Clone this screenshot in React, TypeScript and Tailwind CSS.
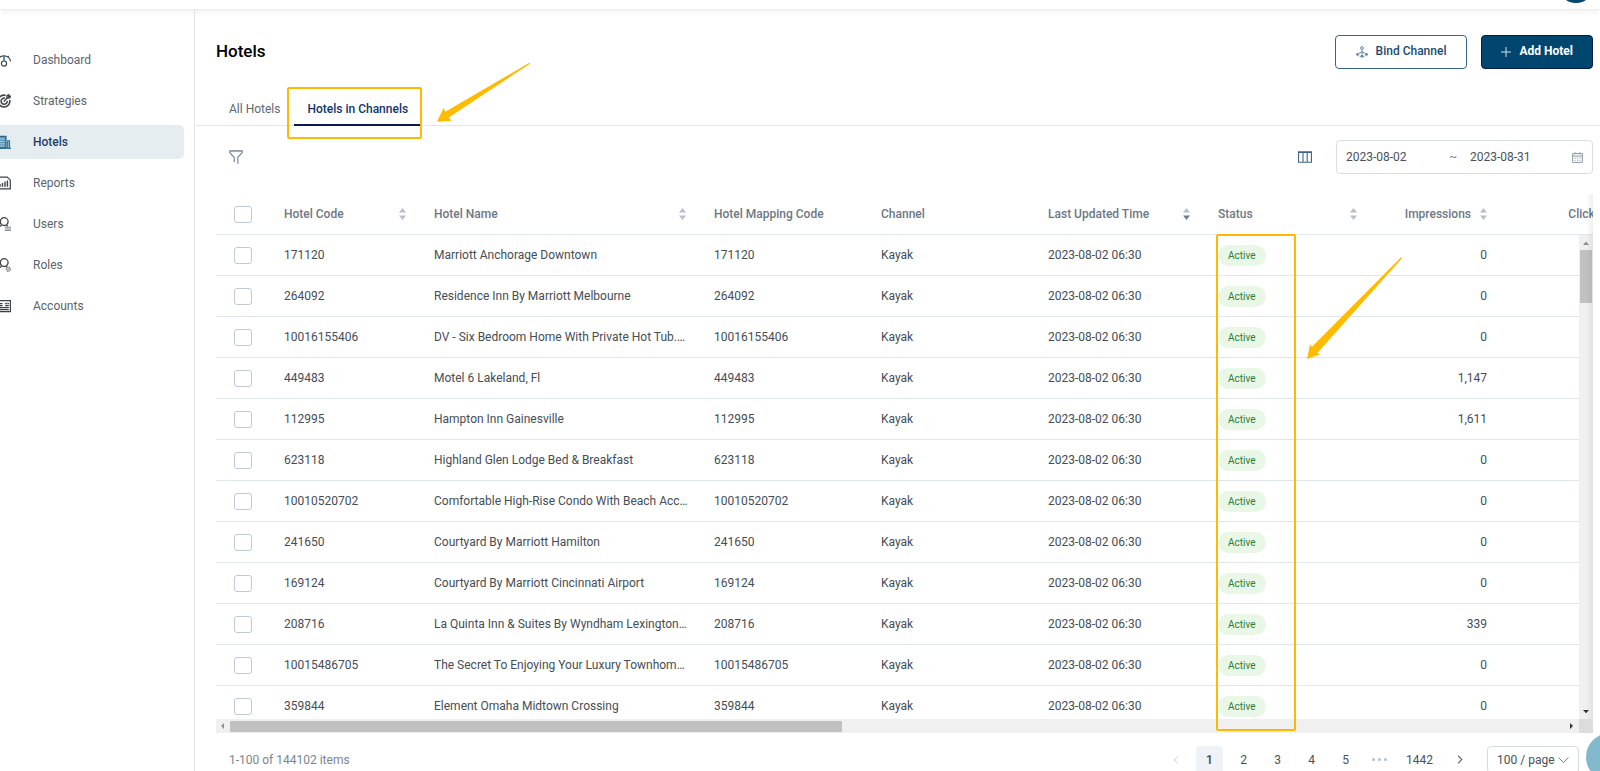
import React from "react";

type SortState = "none" | "both" | "down";

const hotels: { code: string; name: string; impressions: string }[] = [
  { code: "171120", name: "Marriott Anchorage Downtown", impressions: "0" },
  { code: "264092", name: "Residence Inn By Marriott Melbourne", impressions: "0" },
  { code: "10016155406", name: "DV - Six Bedroom Home With Private Hot Tub.…", impressions: "0" },
  { code: "449483", name: "Motel 6 Lakeland, Fl", impressions: "1,147" },
  { code: "112995", name: "Hampton Inn Gainesville", impressions: "1,611" },
  { code: "623118", name: "Highland Glen Lodge Bed & Breakfast", impressions: "0" },
  { code: "10010520702", name: "Comfortable High-Rise Condo With Beach Acc…", impressions: "0" },
  { code: "241650", name: "Courtyard By Marriott Hamilton", impressions: "0" },
  { code: "169124", name: "Courtyard By Marriott Cincinnati Airport", impressions: "0" },
  { code: "208716", name: "La Quinta Inn & Suites By Wyndham Lexington…", impressions: "339" },
  { code: "10015486705", name: "The Secret To Enjoying Your Luxury Townhom…", impressions: "0" },
  { code: "359844", name: "Element Omaha Midtown Crossing", impressions: "0" },
];

const columns: { label: string; width: string; sort: SortState; numeric?: boolean }[] = [
  { label: "Hotel Code", width: "w-[150px]", sort: "both" },
  { label: "Hotel Name", width: "w-[280px]", sort: "both" },
  { label: "Hotel Mapping Code", width: "w-[167px]", sort: "none" },
  { label: "Channel", width: "w-[167px]", sort: "none" },
  { label: "Last Updated Time", width: "w-[170px]", sort: "down" },
  { label: "Status", width: "w-[167px]", sort: "both" },
  { label: "Impressions", width: "w-[130px]", sort: "both", numeric: true },
  { label: "Clicks", width: "w-[130px]", sort: "both", numeric: true },
];

function NavSvg({ children }: { children: React.ReactNode }) {
  return (
    <svg viewBox="0 0 14 14" className="-ml-[3px] size-[14px] shrink-0" fill="none" stroke="#3c4248" strokeWidth="1.2" aria-hidden="true">
      {children}
    </svg>
  );
}

const navIcons: Record<string, React.ReactNode> = {
  Dashboard: (
    <NavSvg>
      <path d="M.4 8.4A6.7 6.7 0 0 1 13.6 8.4M2.3 3l1.2 1.2M11.7 3l-1.2 1.2" />
      <circle cx="7" cy="10.6" r="2.6" />
      <path d="M7 3v5" stroke="#2c7da8" strokeWidth="1.6" />
    </NavSvg>
  ),
  Strategies: (
    <NavSvg>
      <path d="M8.6 1.4A5.9 5.9 0 1 0 12.8 6.2" strokeWidth="1.6" />
      <path d="M8 4.2a3.1 3.1 0 1 0 2.2 2.6" strokeWidth="1.5" />
      <path d="M6.8 7.4 11 3.2M10 4V1.8L11.7.5v1.8h1.9L12.2 4z" strokeWidth="1.4" />
    </NavSvg>
  ),
  Hotels: (
    <NavSvg>
      <path d="M1 13V1.4h8V13z" fill="#5d93b3" stroke="#27648c" />
      <path d="M2.5 4h5M2.5 6.4h5M2.5 8.8h5M2.5 11h5" stroke="#c3d9e5" strokeWidth=".8" />
      <path d="M10.6 13V5.6h2V13" fill="#8fb5cb" stroke="#27648c" strokeWidth=".9" />
      <path d="M0 13.3h14" stroke="#27648c" />
    </NavSvg>
  ),
  Reports: (
    <NavSvg>
      <path d="M.7 1.2h9.6l3 3v8.6H.7z" />
      <path d="M3 10.8V8M5.5 10.8V7M8 10.8V5.6M10.4 10.8V4.4" strokeWidth="1.4" />
    </NavSvg>
  ),
  Users: (
    <NavSvg>
      <circle cx="7.2" cy="4.6" r="3.9" strokeWidth="1.3" />
      <path d="M1 13.2c0-2.6 1.3-4 3.6-4.8M9.4 8l1.4 1.4" strokeWidth="1.3" />
      <path d="M7.8 10.2H14M7.8 12H14M7.8 13.6H14" stroke="#81878c" strokeWidth="1" />
    </NavSvg>
  ),
  Roles: (
    <NavSvg>
      <circle cx="7.2" cy="4.6" r="3.9" strokeWidth="1.3" />
      <path d="M1 13.2c0-2.6 1.3-4 3.6-4.8M9 8l1 1" strokeWidth="1.3" />
      <circle cx="11.2" cy="11.2" r="2" stroke="#81878c" strokeWidth="1.4" strokeDasharray="1.1 .4" />
      <circle cx="11.2" cy="11.2" r=".7" stroke="#81878c" strokeWidth=".7" />
    </NavSvg>
  ),
  Accounts: (
    <NavSvg>
      <path d="M.6 1.6h12.8v11H.6z" />
      <path d="M2.6 4.6h3M2.6 6.6h3M10 3.6v1.6M8.2 6.6h3.6M2.6 8.6h9.2M2.6 10.6h9.2" strokeWidth="1.1" />
      <path d="M8 4.6h1.2M10.8 4.6H12" />
    </NavSvg>
  ),
};

function Sorter({ state }: { state: SortState }) {
  return (
    <svg viewBox="0 0 7 12" className="h-[12px] w-[7px] shrink-0" aria-hidden="true">
      <path d="M3.5 0 7 4.6H0z" fill="#b4c0cb" />
      <path d="M3.5 12 0 7.4h7z" fill={state === "down" ? "#6a7b8b" : "#b4c0cb"} />
    </svg>
  );
}

function Checkbox({ label }: { label: string }) {
  return (
    <input
      type="checkbox"
      aria-label={label}
      className="mx-auto block h-[17px] w-[18px] appearance-none rounded-[3px] border border-[#bfcad4] bg-white checked:bg-[#00466e]"
    />
  );
}

function Sidebar() {
  return (
    <nav className="w-[195px] shrink-0 overflow-hidden border-r border-[#e1e6ea] pt-[33px] pr-[10px]">
      <ul className="flex flex-col gap-[7px]">
        {Object.keys(navIcons).map((name) => (
          <li key={name}>
            <a
              href="#"
              aria-current={name === "Hotels" ? "page" : undefined}
              className={
                name === "Hotels"
                  ? "flex h-[34px] items-center gap-[22px] rounded-r-[5px] bg-[#e6edf0] font-medium text-[#1d3f66]"
                  : "flex h-[34px] items-center gap-[22px] text-[#5b636b]"
              }
            >
              {navIcons[name]}
              {name}
            </a>
          </li>
        ))}
      </ul>
    </nav>
  );
}

function PageHeader() {
  return (
    <header className="flex h-[34px] items-center gap-[14px] pr-[7px] pl-[21px]">
      <h1 className="flex-1 pb-[2px] text-[17px] leading-[22px] font-medium text-black">Hotels</h1>
      <button className="flex h-[34px] items-center gap-2 rounded-[4px] border border-[#35658a] px-5 pb-[2px] font-medium text-[#214a70]">
        <svg viewBox="0 0 12 12" className="mt-[2px] size-[12px]" fill="none" stroke="#5f8aa6" aria-hidden="true">
          <circle cx="6" cy="2" r="1.4" />
          <path d="M6 3.4v5.2M6 5.8 2.6 7.6M6 5.8l3.4 1.8M3.4 10l1.2.5M8.6 10l-1.2.5" />
          <circle cx="6" cy="10.2" r="1.1" fill="#5f8aa6" />
          <circle cx="1.5" cy="8.4" r="1" fill="#5f8aa6" />
          <circle cx="10.5" cy="8.4" r="1" fill="#5f8aa6" />
        </svg>
        Bind Channel
      </button>
      <button className="flex h-[34px] items-center gap-2 rounded-[4px] border border-[#001a56] bg-[#00466e] px-[19px] pb-[2px] font-bold text-white">
        <svg viewBox="0 0 10 10" className="mt-[2px] size-[10px]" stroke="#d5e2ea" aria-hidden="true">
          <path d="M5 0v10M0 5h10" />
        </svg>
        Add Hotel
      </button>
    </header>
  );
}

function Tabs() {
  return (
    <div role="tablist" className="mt-6 flex h-[33px] border-b border-[#e1e4e8] pl-5">
      <button role="tab" aria-selected="false" className="h-[33px] px-[14px] pb-[2px] text-[#5d6872]">
        All Hotels
      </button>
      <div className="relative">
        <button role="tab" aria-selected="true" className="h-[33px] px-[13px] pb-[2px] font-medium text-[#10356b]">
          Hotels in Channels
          <span className="absolute inset-x-0 -bottom-px h-[2px] bg-[#0a1a55]" />
        </button>
        <div className="pointer-events-none absolute -top-[6px] -left-[7px] h-[52px] w-[135px] rounded-[2px] border-2 border-[#ffb900]" />
        <svg viewBox="0 0 96 62" className="pointer-events-none absolute -top-[32px] left-[142px] h-[62px] w-[96px]" fill="#ffbb00" aria-hidden="true">
          <path d="M1 60.7 7.7 46.7 9.3 50.7 93.3 1.7 94 2.7 12.3 56.7 16 59.7z" />
        </svg>
      </div>
    </div>
  );
}

function Toolbar() {
  return (
    <div className="mt-[14px] flex h-[34px] items-center pr-[7px] pl-[34px]">
      <button aria-label="Filter" className="size-[14px]">
        <svg viewBox="0 0 14 14" className="size-[14px]" fill="none" stroke="#6f7f8e" strokeWidth="1.1" strokeLinejoin="round" aria-hidden="true">
          <path d="M5.3 12V7.6L.8 2.6V.8h12.4v1.8L8.9 7.2V13.8M5.3 7.6" />
          <path d="M.9 1.6h12.2" strokeWidth=".6" />
        </svg>
      </button>
      <span className="flex-1" />
      <button aria-label="Columns" className="mr-6 h-[12px] w-[14px]">
        <svg viewBox="0 0 14 12" className="h-[12px] w-[14px]" fill="none" stroke="#3e6384" strokeWidth="1.1" aria-hidden="true">
          <path d="M.6.8h12.8v10.4H.6zM.6 1.4h12.8M5 .8v10.4M9.2 .8v10.4" />
        </svg>
      </button>
      <div className="flex h-[34px] w-[257px] items-center rounded-[4px] border border-[#d9dee3] px-[9px] text-[#4a5158]">
        <input aria-label="Start date" defaultValue="2023-08-02" className="w-[97px] min-w-0 outline-none" />
        <span className="w-[27px] pl-[6px] text-[#7d8894]">~</span>
        <input aria-label="End date" defaultValue="2023-08-31" className="min-w-0 flex-1 outline-none" />
        <svg viewBox="0 0 11 11" className="size-[11px] shrink-0" fill="none" stroke="#8e99a4" aria-hidden="true">
          <path d="M.6 1.6h9.8v8.8H.6zM.6 4h9.8M3 .2v2M8 .2v2" />
          <path d="M2.4 6h1.2M4.9 6h1.2M7.4 6h1.2M2.4 8.2h1.2M4.9 8.2h1.2M7.4 8.2h1.2" strokeWidth="1.1" />
        </svg>
      </div>
    </div>
  );
}

function HotelTable() {
  return (
    <div className="relative mt-5 mr-[7px] ml-[21px]">
      <div className="relative">
        <div className="h-[525px] overflow-auto [scrollbar-width:none]">
          <table className="w-full min-w-[1415px] table-fixed border-separate border-spacing-0 text-left whitespace-nowrap">
            <thead>
              <tr className="h-[41px]">
                <th className="w-[54px] border-b border-[#e0e5e9] p-0">
                  <Checkbox label="Select all hotels" />
                </th>
                {columns.map((c) => (
                  <th key={c.label} className={`${c.width} border-b border-[#e0e5e9] px-[14px] py-0 font-medium text-[#6c7885]`}>
                    <div className={c.numeric ? "flex items-center justify-end gap-[9px]" : "flex items-center justify-between"}>
                      {c.label}
                      {c.sort !== "none" && <Sorter state={c.sort} />}
                    </div>
                  </th>
                ))}
              </tr>
            </thead>
            <tbody className="text-[#464d54] [&_td]:border-b [&_td]:border-[#e0e5e9]">
              {hotels.map((h) => (
                <tr key={h.code} className="h-[41px]">
                  <td className="p-0">
                    <Checkbox label={`Select ${h.name}`} />
                  </td>
                  <td className="px-[14px] py-0">{h.code}</td>
                  <td className="px-[14px] py-0">{h.name}</td>
                  <td className="px-[14px] py-0">{h.code}</td>
                  <td className="px-[14px] py-0">Kayak</td>
                  <td className="px-[14px] py-0">2023-08-02 06:30</td>
                  <td className="px-[14px] py-0">
                    <span className="mt-px flex h-[21px] w-fit items-center rounded-full bg-[#e8f7e6] px-[10px] text-[10px] text-[#2f7d38]">
                      Active
                    </span>
                  </td>
                  <td className="px-[14px] py-0 text-right">{h.impressions}</td>
                  <td className="p-0" />
                </tr>
              ))}
            </tbody>
          </table>
        </div>
        <div className="absolute top-[41px] right-0 bottom-0 flex w-[14px] flex-col items-center bg-[#f0f0f0]">
          <svg viewBox="0 0 14 15" className="h-[15px] w-[14px]" aria-hidden="true">
            <path d="M7 6.4 10 10H4z" fill="#8f8f8f" />
          </svg>
          <div className="h-[53px] w-[12px] bg-[#c1c1c1]" />
          <span className="flex-1" />
          <svg viewBox="0 0 14 15" className="h-[15px] w-[14px]" aria-hidden="true">
            <path d="M7 9.2 4 6h6z" fill="#333" />
          </svg>
        </div>
        <div className="pointer-events-none absolute top-0 right-0 bottom-0 w-[7px] bg-linear-to-r from-transparent to-black/6" />
      </div>
      <div className="flex h-[14px] items-center bg-[#f0f0f0]">
        <svg viewBox="0 0 14 14" className="size-[14px] shrink-0" aria-hidden="true">
          <path d="M5 7 8 4v6z" fill="#8f8f8f" />
        </svg>
        <div className="h-[11px] w-[612px] bg-[#c1c1c1]" />
        <span className="flex-1" />
        <svg viewBox="0 0 14 14" className="size-[14px] shrink-0" aria-hidden="true">
          <path d="M8 7 5 4v6z" fill="#333" />
        </svg>
        <div className="size-[14px] bg-[#dcdcdc]" />
      </div>
      <div className="pointer-events-none absolute top-[40px] left-[1000px] h-[497px] w-[80px] rounded-[2px] border-2 border-[#ffb900]" />
      <svg viewBox="0 0 97 104" className="pointer-events-none absolute top-[62px] left-[1090px] h-[104px] w-[97px]" fill="#ffbb00" aria-hidden="true">
        <path d="M1 103 4 88.3 6 90.7 95 1.3 96 2.3 11.3 97 14.3 98.3z" />
      </svg>
    </div>
  );
}

function Pagination() {
  return (
    <footer className="mt-[13px] mr-[21px] ml-[34px] flex h-[27px] items-center text-[#4a5158]">
      <span className="flex-1 text-[#7a8591]">1-100 of 144102 items</span>
      <nav aria-label="Pagination" className="flex items-center gap-[7px]">
        <button aria-label="Previous page" className="flex h-[27px] w-[27px] items-center justify-center">
          <svg viewBox="0 0 6 10" className="h-[8px] w-[6px]" fill="none" stroke="#b3bcc5" aria-hidden="true">
            <path d="M5.2.8 1 5l4.2 4.2" />
          </svg>
        </button>
        {["1", "2", "3", "4", "5"].map((n) => (
          <button
            key={n}
            className={n === "1" ? "h-[27px] w-[27px] rounded-[4px] bg-[#eff3f7] font-medium text-[#3d444b]" : "h-[27px] w-[27px]"}
          >
            {n}
          </button>
        ))}
        <button aria-label="More pages" className="flex h-[27px] w-[27px] items-center justify-center gap-[3px]">
          <i className="size-[3px] rounded-full bg-[#b3bfca]" />
          <i className="size-[3px] rounded-full bg-[#b3bfca]" />
          <i className="size-[3px] rounded-full bg-[#b3bfca]" />
        </button>
        <button className="h-[27px] w-[39px]">1442</button>
        <button aria-label="Next page" className="flex h-[27px] w-[27px] items-center justify-center">
          <svg viewBox="0 0 6 10" className="h-[9px] w-[6px]" fill="none" stroke="#5a6269" strokeWidth="1.2" aria-hidden="true">
            <path d="M.8.8 5 5 .8 9.2" />
          </svg>
        </button>
      </nav>
      <div className="relative ml-[14px]">
        <select aria-label="Rows per page" className="block h-[27px] w-[92px] appearance-none rounded-[4px] border border-[#d5dbe1] bg-white pl-[9px] outline-none">
          <option>100 / page</option>
        </select>
        <svg viewBox="0 0 11 7" className="pointer-events-none absolute top-[11px] right-[10px] h-[7px] w-[11px]" fill="none" stroke="#75818c" aria-hidden="true">
          <path d="M.6.6l4.9 5 4.9-5" />
        </svg>
      </div>
    </footer>
  );
}

export default function App() {
  return (
    <div className="relative flex h-screen flex-col overflow-hidden bg-white font-['Roboto','Liberation_Sans',sans-serif] text-[12px] leading-[16px]">
      <div className="relative z-10 h-[10px] shrink-0 border-b border-[#e8ecee] bg-white shadow-[0_2px_6px_rgba(0,0,0,0.06)]">
        <div className="absolute right-[6px] bottom-[6px] size-[36px] rounded-full bg-[#00466e]" />
      </div>
      <div className="flex min-h-0 flex-1">
        <Sidebar />
        <main className="min-w-0 flex-1 pt-[25px]">
          <PageHeader />
          <Tabs />
          <Toolbar />
          <HotelTable />
          <Pagination />
        </main>
      </div>
      <button aria-label="Help" className="absolute -right-[34px] -bottom-[10px] size-[48px] rounded-full bg-[#83b9cd]" />
    </div>
  );
}
